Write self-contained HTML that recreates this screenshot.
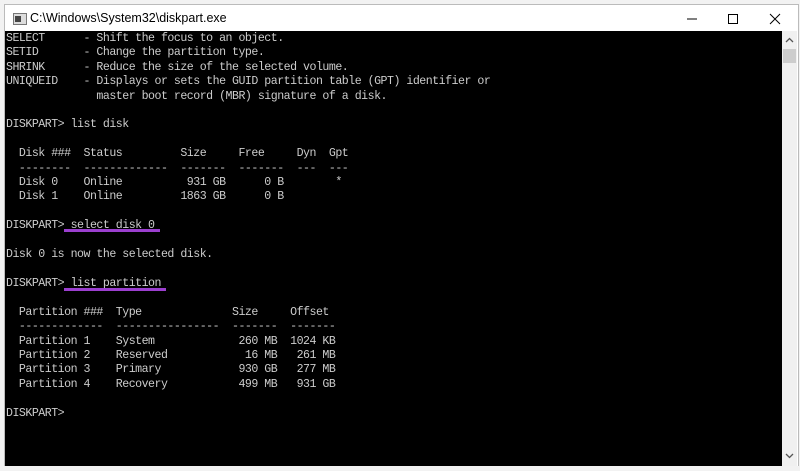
<!DOCTYPE html>
<html><head><style>
body{margin:0;width:800px;height:465px;background:#f2f2f2;position:relative;overflow:hidden;font-family:"Liberation Sans",sans-serif}
.win{position:absolute;left:4px;top:4px;width:793px;height:461px;background:#fff;border:1px solid #bbb;border-bottom:none}
.title{position:absolute;left:0;top:0;width:793px;height:26px;background:#fff}
.title span{position:absolute;left:25px;top:6px;font-size:12.5px;color:#000}
.icon{position:absolute;left:8px;top:8px;width:12px;height:10px;border:1px solid #777;background:#ddd}
.icon:after{content:"";position:absolute;left:1px;top:2px;width:6px;height:6px;background:#444}
.con{position:absolute;left:0;top:26px;width:777px;height:435px;background:#000}
pre{margin:0;position:absolute;left:1px;top:1px;font-family:"Liberation Mono",monospace;font-size:11.6px;letter-spacing:-0.5px;line-height:14.4px;color:#cccccc}
.sb{position:absolute;left:777px;top:26px;width:15px;height:435px;background:#f0f0f0}
.ul{position:absolute;height:3px;background:#9b3fcf;left:64px}
</style></head><body>
<div class="win">
<div class="title"><div class="icon"></div><span>C:\Windows\System32\diskpart.exe</span>
<svg style="position:absolute;left:680px;top:6px" width="110" height="16"><line x1="2" y1="8" x2="12" y2="8" stroke="#000"/><rect x="43.5" y="3.5" width="9" height="9" fill="none" stroke="#000"/><path d="M85 3L95 13M95 3L85 13" stroke="#000"/></svg>
</div>
<div class="con"><pre>SELECT      - Shift the focus to an object.
SETID       - Change the partition type.
SHRINK      - Reduce the size of the selected volume.
UNIQUEID    - Displays or sets the GUID partition table (GPT) identifier or
              master boot record (MBR) signature of a disk.

DISKPART&gt; list disk

  Disk ###  Status         Size     Free     Dyn  Gpt
  --------  -------------  -------  -------  ---  ---
  Disk 0    Online          931 GB      0 B        *
  Disk 1    Online         1863 GB      0 B

DISKPART&gt; select disk 0

Disk 0 is now the selected disk.

DISKPART&gt; list partition

  Partition ###  Type              Size     Offset
  -------------  ----------------  -------  -------
  Partition 1    System             260 MB  1024 KB
  Partition 2    Reserved            16 MB   261 MB
  Partition 3    Primary            930 GB   277 MB
  Partition 4    Recovery           499 MB   931 GB

DISKPART&gt;</pre></div>
<div class="sb"><svg width="15" height="435"><path d="M4 11L7.5 7.5L11 11" fill="none" stroke="#555" stroke-width="1.3"/><rect x="1" y="18" width="13" height="14" fill="#cdcdcd"/><path d="M4 423L7.5 426.5L11 423" fill="none" stroke="#555" stroke-width="1.3"/></svg></div>
</div>
<div class="ul" style="top:229px;width:96px"></div>
<div class="ul" style="top:288px;width:102px"></div>
</body></html>
